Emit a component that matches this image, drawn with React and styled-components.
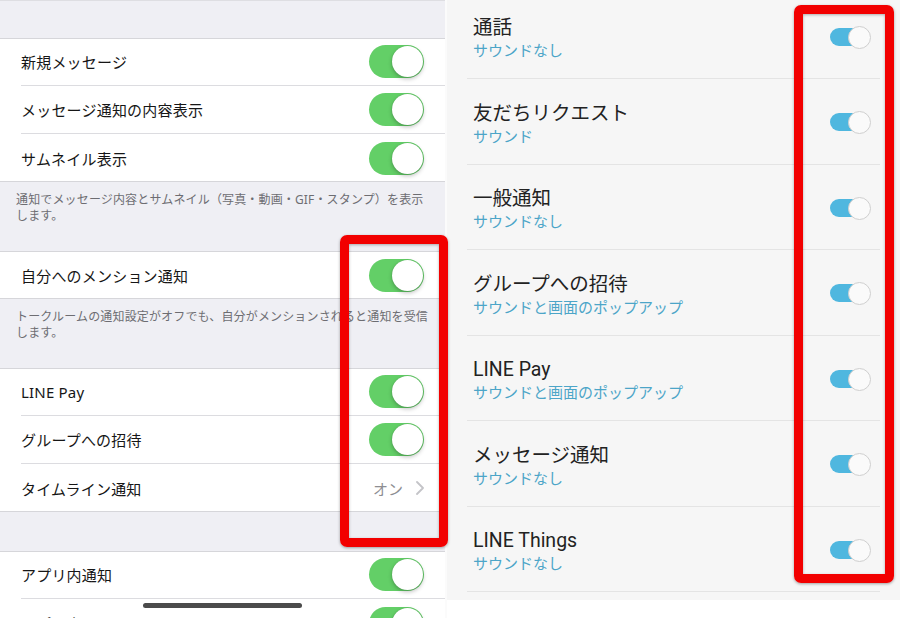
import React from 'react';
import styled, { createGlobalStyle } from 'styled-components';

const GlobalStyle = createGlobalStyle`
  html, body {
    margin: 0;
    padding: 0;
    background: #ffffff;
  }
  body {
    font-family: "Noto Sans", "Noto Sans CJK JP", sans-serif;
  }
`;

const Screen = styled.div`
  position: relative;
  width: 900px;
  height: 618px;
  overflow: hidden;
  display: flex;
  background: #ffffff;
`;

/* ---------- left: iOS settings ---------- */

const IosPanel = styled.div`
  width: 445px;
  flex-shrink: 0;
  background: #efeff4;
  display: flex;
  flex-direction: column;
`;

const TopStrip = styled.div`
  height: 2px;
  background: #f7f7f9;
  border-bottom: 1px solid #dedee2;
  box-sizing: border-box;
`;

const Gap = styled.div`
  height: ${({ h }) => h}px;
  flex-shrink: 0;
`;

const Group = styled.div`
  background: #ffffff;
  flex-shrink: 0;
  box-shadow: inset 0 1px #d6d6da, inset 0 -1px #d6d6da;
`;

const Row = styled.div`
  padding-left: 21px;
`;

const RowInner = styled.div`
  height: 48px;
  box-sizing: border-box;
  padding-right: 21px;
  display: flex;
  align-items: center;
  justify-content: space-between;
  border-bottom: ${({ last }) => (last ? 'none' : '1px solid #dcdce0')};
`;

const Label = styled.span`
  font-size: 15px;
  color: #161616;
  letter-spacing: 0.2px;
`;

const Footnote = styled.p`
  margin: 0;
  padding: 10px 16px 27px;
  font-size: 12px;
  line-height: 16px;
  color: #6d6d72;
  letter-spacing: 0.15px;
  flex-shrink: 0;
`;

const IosTrack = styled.div`
  position: relative;
  width: 55px;
  height: 33px;
  border-radius: 17px;
  background: #63cf67;
  flex-shrink: 0;

  &::after {
    content: '';
    position: absolute;
    top: 1px;
    right: 1px;
    width: 31px;
    height: 31px;
    border-radius: 50%;
    background: #ffffff;
    box-shadow: 0 2px 4px rgba(0, 0, 0, 0.25), 0 0 1px rgba(0, 0, 0, 0.2);
  }
`;

const Value = styled.span`
  display: flex;
  align-items: center;
  gap: 13px;
  font-size: 15px;
  color: #8e8e93;
`;

const HomeBar = styled.div`
  position: absolute;
  left: 143px;
  top: 603px;
  width: 159px;
  height: 5px;
  border-radius: 3px;
  background: #4b4b4b;
`;

/* ---------- right: Android settings ---------- */

const Divider = styled.div`
  width: 2px;
  flex-shrink: 0;
  background: #fbfbfb;
`;

const DroidPanel = styled.div`
  flex: 1;
  height: 600px;
  background: #f6f6f6;
  overflow: hidden;
`;

const DroidList = styled.div`
  margin-top: -6.5px;
  padding: 0 20px;
`;

const DroidRow = styled.div`
  height: 85.5px;
  box-sizing: border-box;
  border-bottom: 1px solid #e4e4e4;
  padding: 0 9px 0 6px;
  display: flex;
  align-items: center;
  justify-content: space-between;
`;

const DroidText = styled.div`
  display: flex;
  flex-direction: column;
  padding-top: 7px;
`;

const Title = styled.span`
  font-family: Roboto, "Noto Sans CJK JP", sans-serif;
  font-size: 19.5px;
  line-height: 25px;
  color: #222222;
`;

const Sub = styled.span`
  font-family: Roboto, "Noto Sans CJK JP", sans-serif;
  font-size: 15px;
  line-height: 23px;
  color: #4ca5c8;
`;

const DroidSwitch = styled.div`
  position: relative;
  width: 41px;
  height: 22px;
  margin-top: 2px;
  flex-shrink: 0;

  &::before {
    content: '';
    position: absolute;
    left: 0;
    top: 2px;
    width: 36px;
    height: 18px;
    border-radius: 9px;
    background: #4fb7df;
  }

  &::after {
    content: '';
    position: absolute;
    right: 0;
    top: 0;
    width: 21px;
    height: 21px;
    border-radius: 50%;
    background: #fafafa;
    border: 1px solid #cfcfcf;
  }
`;

/* ---------- annotation overlays ---------- */

const Highlight = styled.div`
  position: absolute;
  left: ${({ x }) => x}px;
  top: ${({ y }) => y}px;
  width: ${({ w }) => w}px;
  height: ${({ h }) => h}px;
  box-sizing: border-box;
  border: 9px solid #f20000;
  border-radius: 7px;
  box-shadow: 0 1px 3px rgba(0, 0, 0, 0.35), inset 0 1px 3px rgba(0, 0, 0, 0.3);
`;

const Chevron = () => (
  <svg width="8" height="14" viewBox="0 0 8 14">
    <polyline points="1,1 7,7 1,13" fill="none" stroke="#c4c4c8" strokeWidth="1.8" strokeLinecap="round" strokeLinejoin="round" />
  </svg>
);

const IosGroup = ({ rows }) => (
  <Group>
    {rows.map((r, i) => (
      <Row key={r.label}>
        <RowInner last={i === rows.length - 1}>
          <Label>{r.label}</Label>
          {r.value ? (
            <Value>
              {r.value}
              <Chevron />
            </Value>
          ) : (
            <IosTrack />
          )}
        </RowInner>
      </Row>
    ))}
  </Group>
);

const droidItems = [
  { title: '通話', sub: 'サウンドなし' },
  { title: '友だちリクエスト', sub: 'サウンド' },
  { title: '一般通知', sub: 'サウンドなし' },
  { title: 'グループへの招待', sub: 'サウンドと画面のポップアップ' },
  { title: 'LINE Pay', sub: 'サウンドと画面のポップアップ' },
  { title: 'メッセージ通知', sub: 'サウンドなし' },
  { title: 'LINE Things', sub: 'サウンドなし' },
];

const App = () => (
  <>
    <GlobalStyle />
    <Screen>
      <IosPanel>
        <TopStrip />
        <Gap h={37} />
        <IosGroup
          rows={[
            { label: '新規メッセージ' },
            { label: 'メッセージ通知の内容表示' },
            { label: 'サムネイル表示' },
          ]}
        />
        <Footnote>
          通知でメッセージ内容とサムネイル（写真・動画・GIF・スタンプ）を表示
          <br />
          します。
        </Footnote>
        <IosGroup rows={[{ label: '自分へのメンション通知' }]} />
        <Footnote>
          トークルームの通知設定がオフでも、自分がメンションされると通知を受信
          <br />
          します。
        </Footnote>
        <IosGroup
          rows={[
            { label: 'LINE Pay' },
            { label: 'グループへの招待' },
            { label: 'タイムライン通知', value: 'オン' },
          ]}
        />
        <Gap h={39} />
        <IosGroup rows={[{ label: 'アプリ内通知' }, { label: 'アプリ内サウンド' }]} />
      </IosPanel>
      <Divider />
      <DroidPanel>
        <DroidList>
          {droidItems.map((item) => (
            <DroidRow key={item.title}>
              <DroidText>
                <Title>{item.title}</Title>
                <Sub>{item.sub}</Sub>
              </DroidText>
              <DroidSwitch />
            </DroidRow>
          ))}
        </DroidList>
      </DroidPanel>
      <HomeBar />
      <Highlight x={340} y={235} w={108} h={312} />
      <Highlight x={794} y={5} w={100} h={578} />
    </Screen>
  </>
);

export default App;
